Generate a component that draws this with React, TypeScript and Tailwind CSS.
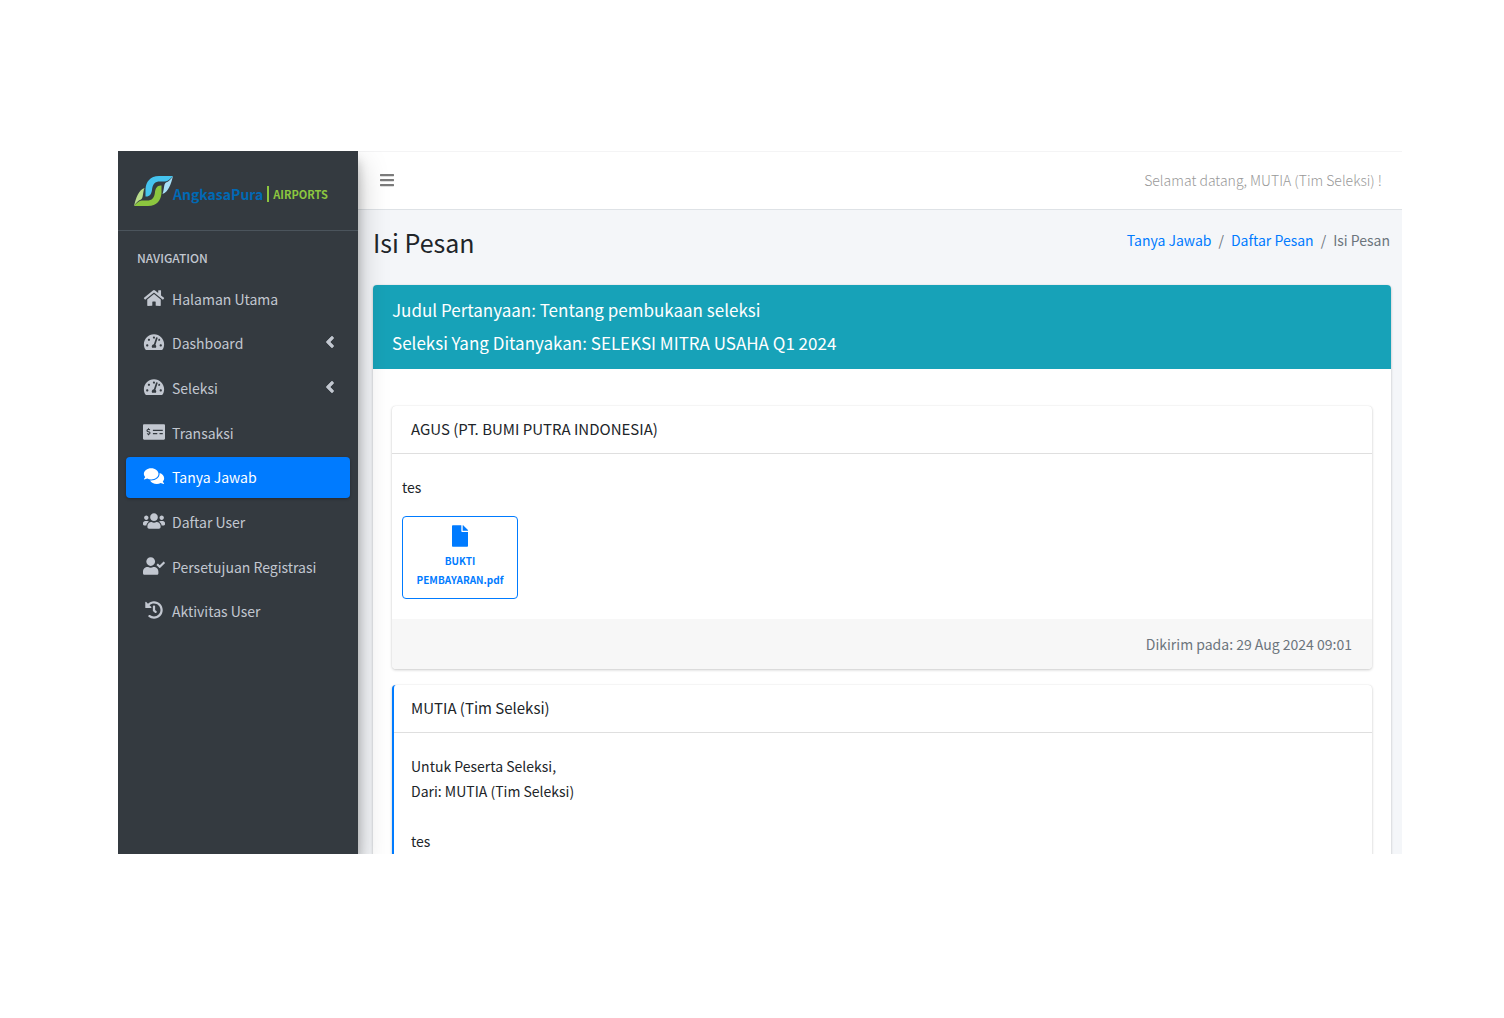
import React from "react";
import type { IconType } from "react-icons";
import {
  FaAngleLeft,
  FaBars,
  FaComments,
  FaFile,
  FaHistory,
  FaHome,
  FaMoneyCheckAlt,
  FaTachometerAlt,
  FaUserCheck,
  FaUsers,
} from "react-icons/fa";

type NavItem = { label: string; icon: IconType; active?: boolean; nested?: boolean };

const navItems: NavItem[] = [
  { label: "Halaman Utama", icon: FaHome },
  { label: "Dashboard", icon: FaTachometerAlt, nested: true },
  { label: "Seleksi", icon: FaTachometerAlt, nested: true },
  { label: "Transaksi", icon: FaMoneyCheckAlt },
  { label: "Tanya Jawab", icon: FaComments, active: true },
  { label: "Daftar User", icon: FaUsers },
  { label: "Persetujuan Registrasi", icon: FaUserCheck },
  { label: "Aktivitas User", icon: FaHistory },
];

function BrandMark() {
  return (
    <svg viewBox="0 0 39 32" className="h-8 w-[39px] shrink-0" aria-hidden="true">
      <path d="M39 1H25C16 1 12 7 11.500 14V21.500C15.500 22 17.500 19 18 15C18.500 9 21 6.500 26 6.500H31C35 6 37 3 39 1Z" fill="#45c3ee" />
      <path d="M39 1C37 4 35 6.500 32 7.500C29.500 9 30.500 14 28.500 19C34.500 17 37 9 39 1Z" fill="#a9e0f7" />
      <path d="M0 31H14C23 31 27 25 27.500 18V10.500C23.500 10 21.500 13 21 17C20.500 23 18 25.500 13 25.500H8C4 26 2 29 0 31Z" fill="#8cc63f" />
      <path d="M0 31C2 28 4 25.500 7 24.500C9.500 23 8.500 18 10.500 13C4.500 15 2 23 0 31Z" fill="#b9dc8c" />
    </svg>
  );
}

function Sidebar() {
  return (
    <aside className="z-10 flex w-60 shrink-0 flex-col bg-[#343a40] text-[#c2c7d0] shadow-[0_14px_28px_rgba(0,0,0,0.25),0_10px_10px_rgba(0,0,0,0.22)]">
      <a href="#" className="flex h-20 items-center border-b border-[#4b545c] pl-4" aria-label="AngkasaPura Airports">
        <BrandMark />
        <span className="mt-1.5 flex items-center leading-5 font-bold whitespace-nowrap">
          <span className="text-sm text-[#0069b4]">AngkasaPura</span>
          <span className="mx-1 h-4 w-0.5 bg-[#8cc63f]" />
          <span className="text-[11px] text-[#8cc63f]">AIRPORTS</span>
        </span>
      </a>
      <h2 className="mt-4 pl-[19px] text-xs leading-[22px] font-medium">NAVIGATION</h2>
      <nav className="mx-2 mt-[9px]">
        <ul className="flex h-[354px] flex-col justify-between">
          {navItems.map(({ label, icon: Icon, active, nested }) => (
            <li key={label}>
              <a
                href="#"
                aria-current={active ? "page" : undefined}
                className={
                  active
                    ? "flex h-[41px] items-center rounded bg-[#007bff] pr-[11px] pl-4 text-white shadow-[0_1px_3px_rgba(0,0,0,0.3)]"
                    : "flex h-[41px] items-center rounded pr-[11px] pl-4"
                }
              >
                <span className="mb-0.5 flex w-6 justify-center">
                  <Icon className="h-[18px] w-[22px]" />
                </span>
                <span className="ml-1.5 flex-1 text-sm leading-6">{label}</span>
                {nested && <FaAngleLeft className="mb-0.5 size-[18px]" stroke="currentColor" strokeWidth={20} />}
              </a>
            </li>
          ))}
        </ul>
      </nav>
    </aside>
  );
}

function TopBar() {
  return (
    <header className="flex h-[59px] shrink-0 items-center justify-between border-y border-t-[#f4f4f5] border-b-[#dee2e6] bg-white pr-5 pb-0.5 pl-[21px]">
      <button type="button" aria-label="Menu" className="text-[#7b7b7b]">
        <FaBars className="size-4" />
      </button>
      <span className="text-sm leading-6 font-light text-[#999999]">Selamat datang, MUTIA (Tim Seleksi) !</span>
    </header>
  );
}

function PageHeading() {
  return (
    <div className="flex items-start justify-between pt-3.5 pr-3 pl-[15px]">
      <h1 className="text-[25px] leading-9 text-[#212529]">Isi Pesan</h1>
      <nav aria-label="Breadcrumb" className="mt-1">
        <ol className="flex gap-[7px] text-sm leading-6 text-[#6c757d]">
          <li><a href="#" className="text-[#007bff]">Tanya Jawab</a></li>
          <li aria-hidden="true">/</li>
          <li><a href="#" className="text-[#007bff]">Daftar Pesan</a></li>
          <li aria-hidden="true">/</li>
          <li aria-current="page">Isi Pesan</li>
        </ol>
      </nav>
    </div>
  );
}

function Attachment() {
  return (
    <a
      href="#"
      className="mt-4 flex h-[83px] w-[116px] flex-col items-center rounded border border-[#007bff] px-2 pt-2 text-center text-[10px] leading-[19px] font-bold text-[#007bff]"
    >
      <FaFile className="mb-1 h-[22px] w-4" />
      <span>BUKTI<br />PEMBAYARAN.pdf</span>
    </a>
  );
}

function App() {
  return (
    <div className="h-screen overflow-hidden bg-white pt-[151px] pr-[102px] pb-[164px] pl-[118px] font-['Noto_Sans_CJK_SC','Noto_Sans',sans-serif] text-[#212529]">
      <div className="flex h-full overflow-hidden">
        <Sidebar />
        <div className="flex min-w-0 flex-1 flex-col bg-[#f4f6f9]">
          <TopBar />
          <main>
            <PageHeading />
            <section className="mt-[25px] mr-[11px] ml-[15px] rounded bg-white shadow-[0_0_1px_rgba(0,0,0,0.125),0_1px_3px_rgba(0,0,0,0.2)]">
              <div className="rounded-t bg-[#17a2b8] px-[19px] pt-2 pb-[10px] text-[17px] leading-[33px] text-white">
                <h2>Judul Pertanyaan: Tentang pembukaan seleksi</h2>
                <h2>Seleksi Yang Ditanyakan: SELEKSI MITRA USAHA Q1 2024</h2>
              </div>
              <div className="flex flex-col gap-4 px-[19px] pt-[37px] pb-5 text-sm leading-[25px]">
                <article className="rounded bg-white shadow-[0_0_1px_rgba(0,0,0,0.125),0_1px_3px_rgba(0,0,0,0.2)]">
                  <h3 className="h-12 border-b border-[#dfdfdf] px-[19px] pt-[11px] text-[15px] leading-6">
                    AGUS (PT. BUMI PUTRA INDONESIA)
                  </h3>
                  <div className="px-2.5 pt-[21px] pb-5">
                    <p>tes</p>
                    <Attachment />
                  </div>
                  <p className="rounded-b bg-[#f7f7f7] px-5 pt-[13px] pb-3 text-right text-[#6c757d]">
                    Dikirim pada: 29 Aug 2024 09:01
                  </p>
                </article>
                <article className="rounded border-l-2 border-[#007bff] bg-white shadow-[0_0_1px_rgba(0,0,0,0.125),0_1px_3px_rgba(0,0,0,0.2)]">
                  <h3 className="h-12 border-b border-[#dfdfdf] px-[17px] pt-[11px] text-[15px] leading-6">
                    MUTIA (Tim Seleksi)
                  </h3>
                  <div className="px-[17px] pt-[21px] pb-5">
                    <p>Untuk Peserta Seleksi,</p>
                    <p>Dari: MUTIA (Tim Seleksi)</p>
                    <p className="mt-[25px]">tes</p>
                  </div>
                </article>
              </div>
            </section>
          </main>
        </div>
      </div>
    </div>
  );
}

export default App;
